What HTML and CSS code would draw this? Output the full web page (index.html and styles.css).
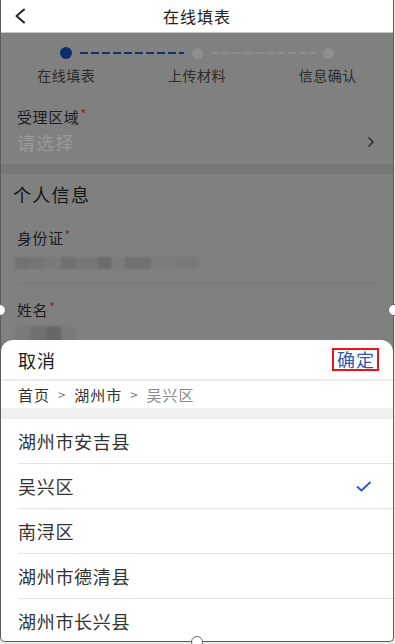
FILE: index.html
```html
<!DOCTYPE html>
<html>
<head>
  <meta charset="utf-8">
  <link rel="stylesheet" href="styles.css">
</head>
<body>
  <div class="frame">
    <div class="screen">
      <header class="topbar">
        <svg class="back" width="14" height="16" viewBox="0 0 14 16">
          <polyline points="10,1.5 2.5,8 10,14.5" fill="none" stroke="#222" stroke-width="2" stroke-linecap="round" stroke-linejoin="round"/>
        </svg>
        <div class="topbar-title">在线填表</div>
      </header>

      <main class="form">
        <div class="stepper">
          <div class="step-track">
            <span class="dot dot-active"></span>
            <span class="dash dash-active"></span>
            <span class="dot"></span>
            <span class="dash"></span>
            <span class="dot"></span>
          </div>
          <div class="step-labels">
            <span>在线填表</span>
            <span>上传材料</span>
            <span>信息确认</span>
          </div>
        </div>

        <div class="field">
          <div class="field-label">受理区域<i class="req">*</i></div>
          <div class="field-select">
            <span class="placeholder">请选择</span>
            <svg width="8" height="12" viewBox="0 0 8 12">
              <polyline points="1.5,1.5 6,6 1.5,10.5" fill="none" stroke="#2e2e2e" stroke-width="1.6"/>
            </svg>
          </div>
        </div>

        <div class="band"></div>

        <h2 class="section-title">个人信息</h2>

        <div class="field field-id">
          <div class="field-label">身份证<i class="req">*</i></div>
          <div class="blur blur-id"></div>
        </div>

        <div class="field field-name">
          <div class="field-label">姓名<i class="req">*</i></div>
          <div class="blur blur-name"></div>
        </div>
      </main>

      <section class="sheet">
        <div class="sheet-head">
          <span class="cancel">取消</span>
          <span class="confirm">确定</span>
        </div>
        <div class="crumbs">
          <span>首页</span><span class="sep">&gt;</span><span>湖州市</span><span class="sep">&gt;</span><span class="current">吴兴区</span>
        </div>
        <ul class="options">
          <li>湖州市安吉县</li>
          <li class="selected">吴兴区
            <svg width="16" height="11" viewBox="0 0 16 11">
              <polyline points="1,5.5 5.5,9.5 14.5,1" fill="none" stroke="#2f58be" stroke-width="1.8" stroke-linejoin="round"/>
            </svg>
          </li>
          <li>南浔区</li>
          <li>湖州市德清县</li>
          <li>湖州市长兴县</li>
        </ul>
      </section>
    </div>

    <span class="handle handle-left"></span>
    <span class="handle handle-right"></span>
    <span class="handle handle-bottom"></span>
  </div>
</body>
</html>
```

FILE: styles.css
```css
* {
  box-sizing: border-box;
}

body {
  margin: 0;
  background: #e4ece4;
  font-family: "Noto Sans CJK SC", "Noto Sans", sans-serif;
}

.frame {
  position: relative;
  width: 395px;
  height: 644px;
  overflow: hidden;
}

.screen {
  position: relative;
  width: 394px;
  height: 642px;
  border-left: 1px solid #5c5c5c;
  border-right: 1px solid #5c5c5c;
  border-bottom: 1px solid #5c5c5c;
  border-radius: 0 0 5px 5px;
  overflow: hidden;
  background: #808080;
}

.topbar {
  display: flex;
  align-items: center;
  justify-content: center;
  position: relative;
  height: 33px;
  background: #fff;
  border-bottom: 1px solid #c4c4c4;
}

.back {
  position: absolute;
  left: 13px;
  top: 8px;
}

.topbar-title {
  font-size: 16px;
  letter-spacing: 1px;
  color: #222;
}

/* dimmed form underneath the sheet */
.form {
  padding: 0 0 0 16px;
}

.stepper {
  margin-left: -16px;
  padding-top: 14px;
}

.step-track {
  display: flex;
  align-items: center;
  gap: 8px;
  padding: 0 59px;
  height: 12px;
}

.dot {
  flex: none;
  width: 11px;
  height: 11px;
  border-radius: 50%;
  background: #8e8e8e;
}

.dot-active {
  width: 12px;
  height: 12px;
  background: #0f2b6e;
}

.dash {
  flex: 1;
  height: 2px;
  background: repeating-linear-gradient(to right, #8c8c8c 0 8px, transparent 8px 11px);
}

.dash-active {
  background: repeating-linear-gradient(to right, #13306f 0 8px, transparent 8px 11px);
}

.step-labels {
  display: grid;
  grid-template-columns: repeat(3, 1fr);
  margin-top: 6px;
  text-align: center;
  font-size: 14px;
  line-height: 20px;
  letter-spacing: 0.5px;
  color: #2c2c2c;
}

.field-label {
  font-size: 15px;
  line-height: 20px;
  letter-spacing: 0.6px;
  color: #1c1c1c;
}

.req {
  font-style: normal;
  font-size: 12px;
  color: #8a2424;
  vertical-align: 4px;
  margin-left: 1px;
}

.field {
  margin-top: 19px;
}

.field-select {
  display: flex;
  align-items: center;
  justify-content: space-between;
  margin-top: 3px;
  padding-right: 18px;
  height: 24px;
}

.placeholder {
  font-size: 18px;
  letter-spacing: 1.3px;
  color: #999;
}

.band {
  height: 10px;
  margin: 10px 0 0 -16px;
  background: #777;
}

.section-title {
  margin: 7px 0 0 -4px;
  font-size: 18px;
  font-weight: normal;
  line-height: 26px;
  letter-spacing: 1.3px;
  color: #151515;
}

.field-id {
  margin-top: 18px;
  padding-bottom: 14px;
  margin-right: 15px;
  border-bottom: 1px solid #767676;
}

.field-name {
  margin-top: 13px;
}

.blur {
  margin-left: -2px;
  filter: blur(0.8px);
}

.blur-id {
  margin-top: 9px;
  width: 184px;
  height: 12px;
  background: linear-gradient(to right,
    #727272 0 8%, #767676 8% 17%, #7a7a7a 17% 25%, #707070 25% 33%,
    #777 33% 45%, #6c6c6c 45% 52%, #7b7b7b 52% 60%, #717171 60% 74%,
    #7c7c7c 74% 88%, #797979 88% 100%);
}

.blur-name {
  margin-top: 6px;
  width: 61px;
  height: 16px;
  background: linear-gradient(to right,
    #7a7a7a 0 25%, #717171 25% 50%, #676767 50% 75%, #7a7a7a 75% 100%);
}

/* region picker sheet */
.sheet {
  position: absolute;
  left: 0;
  right: 0;
  top: 340px;
  bottom: 0;
  background: #fff;
  border-radius: 12px 12px 0 0;
}

.sheet-head {
  display: flex;
  align-items: center;
  justify-content: space-between;
  height: 41px;
  padding: 0 14px 0 17px;
  border-bottom: 2px solid #ececec;
  font-size: 18px;
  letter-spacing: 1px;
}

.cancel {
  color: #222;
}

.confirm {
  color: #2f58b8;
  line-height: 19px;
  padding: 0 2px 0 3px;
  border: 2px solid #e8161b;
}

.crumbs {
  display: flex;
  align-items: center;
  gap: 8px;
  height: 27px;
  padding-left: 17px;
  font-size: 15px;
  letter-spacing: 1px;
  color: #333;
}

.crumbs .sep {
  font-size: 13px;
  color: #777;
}

.crumbs .current {
  color: #888;
}

.options {
  list-style: none;
  margin: 0;
  padding: 0;
  border-top: 11px solid #efefef;
}

.options li {
  display: flex;
  align-items: center;
  justify-content: space-between;
  height: 45px;
  margin-left: 17px;
  padding-right: 21px;
  border-bottom: 1px solid #e2e2e2;
  font-size: 18px;
  letter-spacing: 0.7px;
  color: #333;
}

/* screenshot selection handles */
.handle {
  position: absolute;
  width: 12px;
  height: 12px;
  border-radius: 50%;
  background: #fff;
  border: 1px solid #6a6a6a;
}

.handle-left {
  left: -6px;
  top: 304px;
}

.handle-right {
  left: 388px;
  top: 304px;
}

.handle-bottom {
  left: 191px;
  top: 636px;
}
```
